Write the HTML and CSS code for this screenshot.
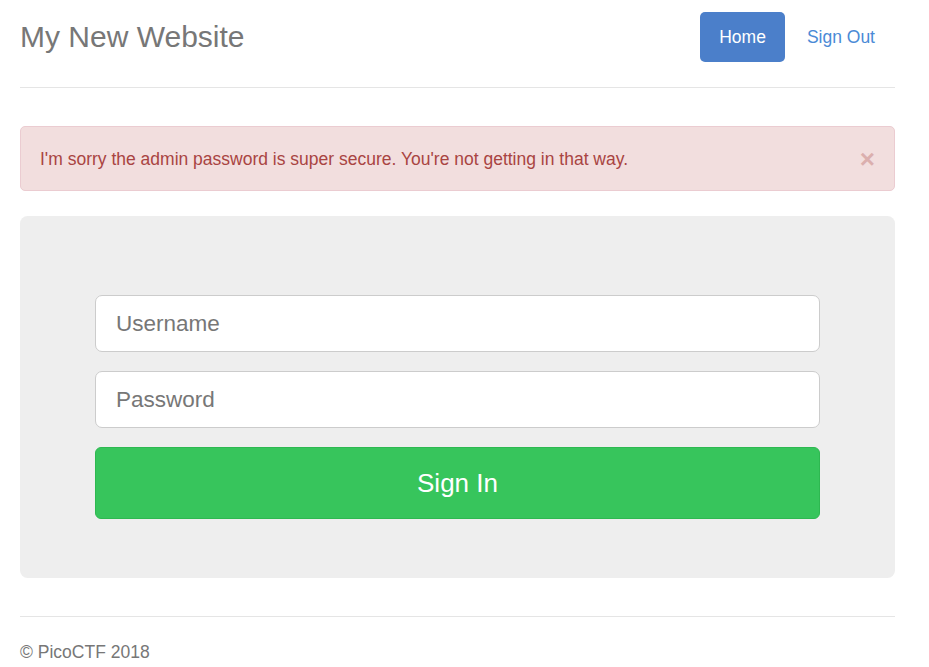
FILE: index.html
```html
<!DOCTYPE html>
<html>
<head>
<meta charset="utf-8">
<title>My New Website</title>
<link rel="stylesheet" href="styles.css">
</head>
<body>
<div class="container">
  <header class="header">
    <h3 class="brand">My New Website</h3>
    <nav class="nav">
      <a class="pill active" href="#">Home</a>
      <a class="pill" href="#">Sign Out</a>
    </nav>
  </header>

  <div class="alert">
    <span class="alert-text">I'm sorry the admin password is super secure. You're not getting in that way.</span>
    <button class="close" type="button">×</button>
  </div>

  <div class="jumbotron">
    <form class="signin">
      <input class="field" type="text" placeholder="Username">
      <input class="field" type="password" placeholder="Password">
      <button class="btn-signin" type="button">Sign In</button>
    </form>
  </div>

  <footer class="footer">© PicoCTF 2018</footer>
</div>
</body>
</html>
```

FILE: styles.css
```css
* { box-sizing: border-box; }
html, body { margin: 0; padding: 0; background: #fff; }
body {
  font-family: "Liberation Sans", Arial, Helvetica, sans-serif;
  font-size: 17.5px;
  line-height: 25px;
  color: #333;
}
.container {
  width: 875px;
  margin-left: 20px;
  padding-top: 12px;
}
.header {
  display: flex;
  justify-content: space-between;
  align-items: center;
  padding-bottom: 25px;
  border-bottom: 1px solid #e5e5e5;
}
.brand {
  margin: 0;
  font-size: 30px;
  font-weight: 400;
  line-height: 50px;
  color: #777;
}
.nav {
  display: flex;
  gap: 3px;
  margin-right: 1px;
}
.pill {
  display: block;
  height: 50px;
  padding: 12.5px 19px;
  line-height: 25px;
  font-size: 17.5px;
  text-decoration: none;
  color: #4a8ad6;
  border-radius: 5px;
}
.pill.active {
  background: #4b7fca;
  color: #fff;
}
.alert {
  display: flex;
  align-items: center;
  justify-content: space-between;
  margin-top: 38px;
  margin-bottom: 25px;
  padding: 18.5px 19px;
  background: #f2dede;
  border: 1px solid #ebccd1;
  border-radius: 5px;
  color: #a94442;
  font-size: 17.5px;
  line-height: 26px;
}
.close {
  border: 0;
  background: none;
  padding: 0;
  font-family: "Liberation Sans", Arial, sans-serif;
  font-size: 26px;
  font-weight: 700;
  line-height: 1;
  color: #a94442;
  opacity: .3;
  cursor: pointer;
}
.jumbotron {
  background: #eee;
  border-radius: 7.5px;
  padding: 79px 75px 59px;
  margin-bottom: 38px;
}
.signin {
  display: flex;
  flex-direction: column;
  gap: 19px;
}
.field {
  display: block;
  width: 100%;
  height: 57px;
  padding: 12px 20px;
  font-family: "Liberation Sans", Arial, sans-serif;
  font-size: 22.5px;
  color: #555;
  background: #fff;
  border: 1px solid #ccc;
  border-radius: 7px;
  outline: none;
}
.field::placeholder { color: #777; }
.btn-signin {
  display: block;
  width: 100%;
  height: 72px;
  font-family: "Liberation Sans", Arial, sans-serif;
  font-size: 26px;
  color: #fff;
  background: #37c55c;
  border: 1px solid #2eb851;
  border-radius: 6px;
  cursor: pointer;
}
.footer {
  border-top: 1px solid #e5e5e5;
  padding-top: 23px;
  color: #777;
  font-size: 17.5px;
  line-height: 25px;
}
```
